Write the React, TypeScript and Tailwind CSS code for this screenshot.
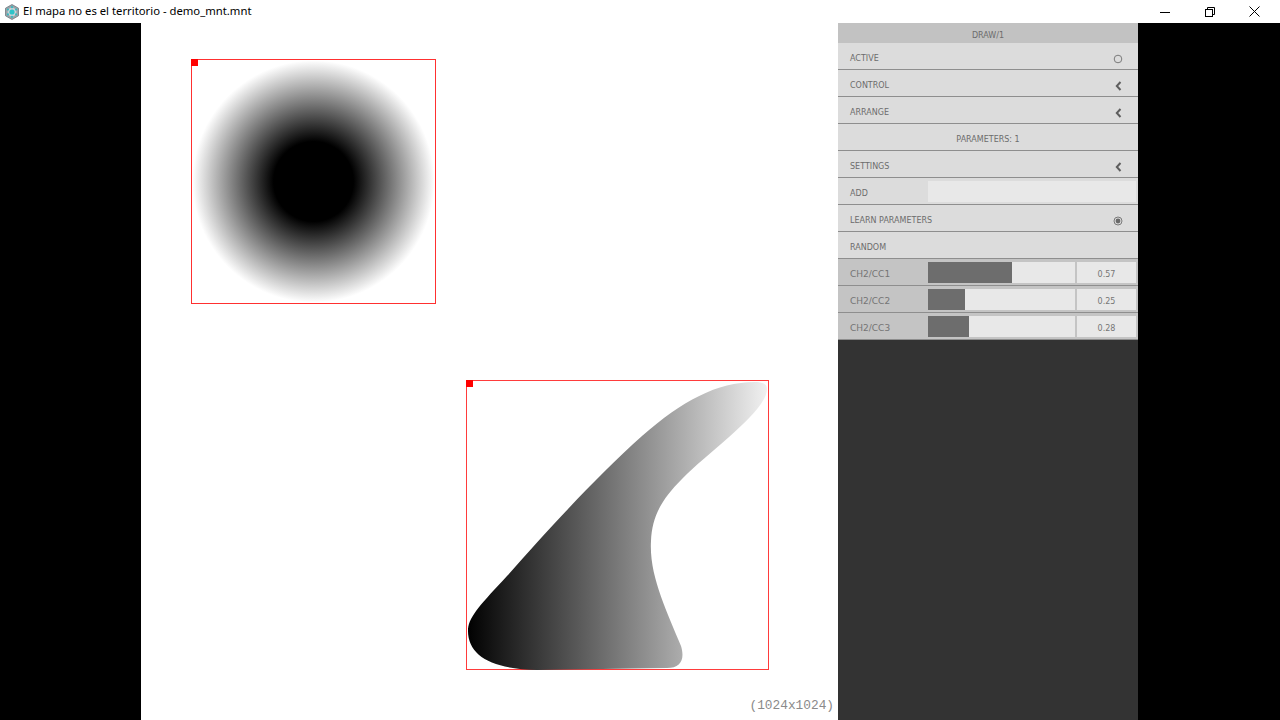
import React from "react";

const ui = { fontFamily: '"DejaVu Sans", "Noto Sans", sans-serif' };

function CircleIcon() {
  return (
    <svg width="10" height="10" viewBox="0 0 10 10">
      <circle cx="5" cy="5" r="3.8" fill="none" stroke="#7a7a7a" strokeWidth="1" />
    </svg>
  );
}
function RadioIcon() {
  return (
    <svg width="10" height="10" viewBox="0 0 10 10">
      <circle cx="5" cy="5" r="4" fill="none" stroke="#7a7a7a" strokeWidth="1" />
      <circle cx="5" cy="5" r="2.4" fill="#6a6a6a" />
    </svg>
  );
}
function Chevron() {
  return (
    <svg width="8" height="10" viewBox="0 0 8 10">
      <path d="M5.5 1 L1.8 5 L5.5 9" fill="none" stroke="#5e5e5e" strokeWidth="2" strokeLinejoin="miter" />
    </svg>
  );
}

function Row({ label, icon, center }: { label: string; icon?: React.ReactNode; center?: boolean }) {
  return (
    <div className="h-[27px] flex items-center bg-[#dcdcdc] border-b border-[#8e8e8e] pt-[5px] pl-[12px] pr-[15px] text-[8px] text-[#6c6c6c]" style={ui}>
      {center ? (
        <div className="flex-1 text-center pl-[3px]">{label}</div>
      ) : (
        <>
          <div className="flex-1">{label}</div>
          {icon}
        </>
      )}
    </div>
  );
}

function SliderRow({ label, value }: { label: string; value: number }) {
  return (
    <div className="h-[27px] flex bg-[#c4c4c4] border-b border-[#8e8e8e] pt-[3px] pb-[2px] pr-[2px]" style={ui}>
      <div className="w-[90px] pl-[12px] pt-[4px] flex items-center text-[9px] text-[#747474]">{label}</div>
      <div className="w-[147px] bg-[#e8e8e8] flex">
        <div className="bg-[#6d6d6d] h-full" style={{ width: `${Math.round(value * 147)}px` }} />
      </div>
      <div className="w-[2px]" />
      <div className="flex-1 bg-[#e8e8e8] flex items-center justify-center pt-[4px] text-[8px] text-[#757575]">{value.toFixed(2)}</div>
    </div>
  );
}

export default function App() {
  return (
    <div className="w-[1280px] h-[720px] flex flex-col bg-black overflow-hidden">
      {/* title bar */}
      <div className="h-[23px] bg-white flex items-center shrink-0">
        <div className="w-[23px] flex items-center justify-center pl-[1px]">
          <svg width="16" height="16" viewBox="0 0 16 16">
            <polygon points="8,0.5 14.5,4.2 14.5,11.8 8,15.5 1.5,11.8 1.5,4.2" fill="#9aa3a8" stroke="#6f7a80" strokeWidth="0.8" />
            <polygon points="8,3 12.3,5.5 12.3,10.5 8,13 3.7,10.5 3.7,5.5" fill="#c9d2d6" />
            <circle cx="8" cy="8" r="2.6" fill="#2ec4c9" />
            <circle cx="8" cy="3.2" r="1.1" fill="#36b8c0" />
            <circle cx="8" cy="12.8" r="1.1" fill="#36b8c0" />
            <circle cx="3.9" cy="5.6" r="1.1" fill="#36b8c0" />
            <circle cx="12.1" cy="5.6" r="1.1" fill="#36b8c0" />
            <circle cx="3.9" cy="10.4" r="1.1" fill="#36b8c0" />
            <circle cx="12.1" cy="10.4" r="1.1" fill="#36b8c0" />
          </svg>
        </div>
        <div className="flex-1 text-[11.3px] text-black" style={{ fontFamily: '"Segoe UI", "Noto Sans", sans-serif' }}>
          El mapa no es el territorio - demo_mnt.mnt
        </div>
        <div className="flex h-full pr-[3px]">
          <div className="w-[45px] flex items-center justify-center">
            <svg width="10" height="10" viewBox="0 0 10 10"><path d="M0 5.5 H10" stroke="#000" strokeWidth="1" /></svg>
          </div>
          <div className="w-[45px] flex items-center justify-center">
            <svg width="10" height="10" viewBox="0 0 10 10">
              <rect x="0.5" y="2.5" width="7" height="7" fill="none" stroke="#000" strokeWidth="1" />
              <path d="M2.5 2.5 V0.5 H9.5 V7.5 H7.5" fill="none" stroke="#000" strokeWidth="1" />
            </svg>
          </div>
          <div className="w-[45px] flex items-center justify-center">
            <svg width="11" height="11" viewBox="0 0 11 11"><path d="M0.5 0.5 L10.5 10.5 M10.5 0.5 L0.5 10.5" stroke="#000" strokeWidth="1" /></svg>
          </div>
        </div>
      </div>

      <div className="flex flex-1">
        <div className="w-[141px] bg-black" />
        {/* canvas */}
        <div className="w-[697px] bg-white relative">
          <svg width="245" height="245" viewBox="0 0 245 245" className="absolute left-[50px] top-[36px]">
            <defs>
              <radialGradient id="rg" cx="122.5" cy="122.5" r="121" gradientUnits="userSpaceOnUse">
                <stop offset="0" stopColor="#000" />
                <stop offset="0.33" stopColor="#000" />
                <stop offset="1" stopColor="#fff" />
              </radialGradient>
            </defs>
            <rect x="1" y="1" width="243" height="243" fill="url(#rg)" />
            <rect x="0.5" y="0.5" width="244" height="244" fill="none" stroke="#ff3030" strokeWidth="1" />
            <rect x="0" y="0" width="7" height="7" fill="#ff0000" />
          </svg>
          <div className="absolute left-[325px] top-[357px] w-[303px] h-[290px] border border-[#ff3b3b]">
            <svg width="302" height="290" viewBox="0 0 302 290" className="absolute left-0 top-0">
              <defs>
                <linearGradient id="g" x1="0" y1="0" x2="302" y2="0" gradientUnits="userSpaceOnUse">
                  <stop offset="0" stopColor="#000" />
                  <stop offset="1" stopColor="#f2f2f2" />
                </linearGradient>
              </defs>
              <path
                d="M 1 248 C 0 275, 25 288, 70 289 L 200 287 C 214 287, 218 278, 214 265 C 200 230, 182 195, 184 160 C 185 135, 195 118, 215 98 C 245 68, 300 30, 300 8 C 300 3, 296 1, 288 1 C 250 1, 215 20, 175 55 C 130 95, 80 150, 40 195 C 15 222, 2 235, 1 248 Z"
                fill="url(#g)"
              />
            </svg>
            <div className="absolute -left-px -top-px w-[7px] h-[7px] bg-[#ff0000]" />
          </div>
          <div className="absolute right-[4px] bottom-[7px] text-[12.8px] text-[#8a8a8a] leading-none" style={{ fontFamily: '"Liberation Mono", monospace' }}>
            (1024x1024)
          </div>
        </div>
        {/* panel */}
        <div className="w-[300px] flex flex-col bg-[#333333]">
          <div className="h-[20px] bg-[#c2c2c2] flex items-center justify-center pt-[5px] text-[8px] text-[#6c6c6c]" style={ui}>
            DRAW/1
          </div>
          <Row label="ACTIVE" icon={<CircleIcon />} />
          <Row label="CONTROL" icon={<Chevron />} />
          <Row label="ARRANGE" icon={<Chevron />} />
          <Row label="PARAMETERS: 1" center />
          <Row label="SETTINGS" icon={<Chevron />} />
          <div className="h-[27px] flex bg-[#dcdcdc] border-b border-[#8e8e8e] pt-[3px] pb-[2px] pr-[2px]" style={ui}>
            <div className="w-[90px] pl-[12px] pt-[4px] flex items-center text-[8px] text-[#6c6c6c]">ADD</div>
            <div className="flex-1 bg-[#e8e8e8]" />
          </div>
          <Row label="LEARN PARAMETERS" icon={<RadioIcon />} />
          <Row label="RANDOM" />
          <SliderRow label="CH2/CC1" value={0.57} />
          <SliderRow label="CH2/CC2" value={0.25} />
          <SliderRow label="CH2/CC3" value={0.28} />
        </div>
        <div className="flex-1 bg-black" />
      </div>
    </div>
  );
}
